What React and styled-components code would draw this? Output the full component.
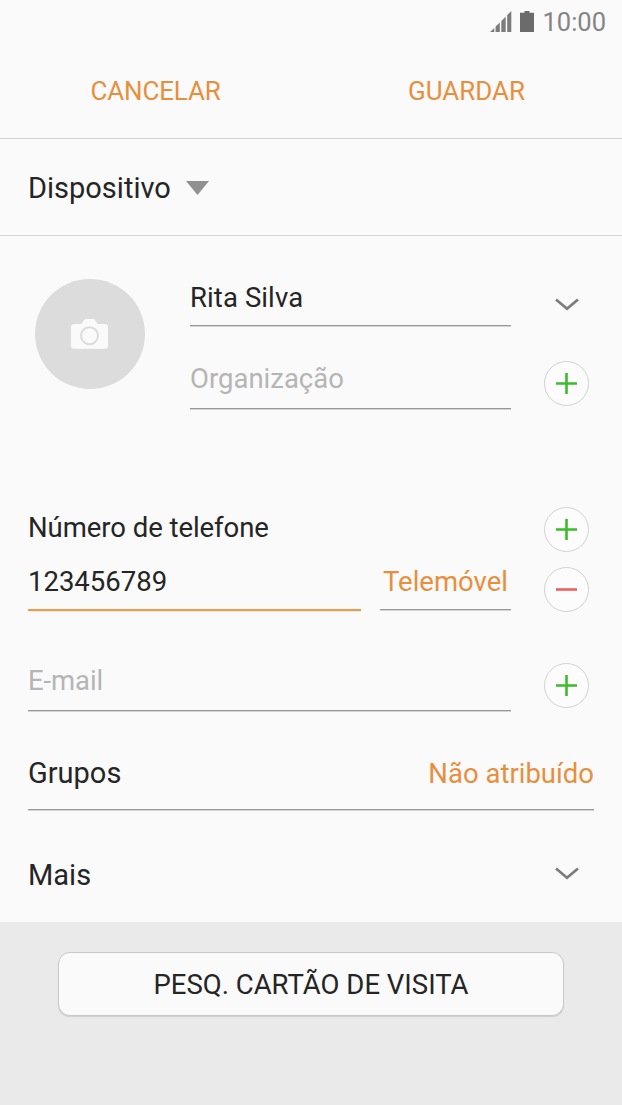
import styled, { createGlobalStyle } from 'styled-components';

const GlobalStyle = createGlobalStyle`
  * {
    box-sizing: border-box;
  }

  body {
    margin: 0;
    background: #fafafa;
    font-family: Roboto, "Noto Sans", sans-serif;
    color: #252525;
  }

  svg {
    display: block;
    flex: none;
  }
`;

const Screen = styled.div`
  display: flex;
  flex-direction: column;
  width: 622px;
  height: 1105px;
  overflow: hidden;
`;

const StatusBar = styled.div`
  display: flex;
  align-items: center;
  justify-content: flex-end;
  gap: 8px;
  height: 43px;
  padding-right: 16px;
`;

const Text = styled.span`
  font-size: ${({ $size }) => $size || 27.5}px;
  line-height: 32px;
  letter-spacing: ${({ $spacing }) => $spacing || 0}px;
  color: ${({ $color }) => $color || 'inherit'};
  white-space: nowrap;
`;

const Actions = styled.header`
  display: grid;
  grid-template-columns: 1fr 1fr;
  justify-items: center;
  height: 96px;
  padding-top: 32px;
  border-bottom: 1px solid #d2d2d2;
`;

const Storage = styled.div`
  display: flex;
  align-items: center;
  gap: 15px;
  height: 97px;
  padding: 2px 28px 0;
  border-bottom: 1px solid #d6d6d6;
`;

const Profile = styled.section`
  display: flex;
  gap: 45px;
  padding: 43px 33px 0 35px;
  height: 271px;
`;

const Avatar = styled.div`
  display: flex;
  align-items: center;
  justify-content: center;
  flex: none;
  width: 110px;
  height: 110px;
  padding-right: 1px;
  border-radius: 50%;
  background: #dcdcdc;
`;

const ProfileFields = styled.div`
  display: flex;
  flex-direction: column;
  gap: 34px;
  flex: 1;
`;

const Row = styled.div`
  display: flex;
  align-items: flex-start;
  justify-content: space-between;
  height: ${({ $height }) => $height}px;
`;

const Section = styled.section`
  padding: 0 33px 0 28px;
`;

const Label = styled.div`
  display: flex;
  padding-top: 5px;
`;

const PhoneFields = styled.div`
  display: flex;
  gap: 19px;
`;

const ButtonSlot = styled.div`
  padding-top: 2px;
`;

const Field = styled.div`
  width: ${({ $width }) => $width}px;
  height: ${({ $height }) => $height}px;
  padding-top: ${({ $top }) => $top || 0}px;
  text-align: ${({ $align }) => $align || 'left'};
  border-bottom: ${({ $active }) => ($active ? '2px solid #eb9b50' : '1px solid #989898')};
  box-shadow: 0 1px ${({ $active }) => ($active ? '#fbe9d8' : '#d4d4d4')};
`;

const RoundButton = styled.button`
  display: flex;
  align-items: center;
  justify-content: center;
  flex: none;
  width: 45px;
  height: 45px;
  padding: 0;
  border: 1px solid #d2d2d2;
  border-radius: 50%;
  background: #fcfcfc;
`;

const ChevronBox = styled.div`
  display: flex;
  justify-content: center;
  width: 45px;
  padding-top: ${({ $top }) => $top || 0}px;
`;

const Groups = styled.div`
  display: flex;
  align-items: baseline;
  justify-content: space-between;
  height: 53px;
  margin: 44px 28px 0;
  border-bottom: 1px solid #989898;
  box-shadow: 0 1px #d4d4d4;
`;

const More = styled.div`
  display: flex;
  justify-content: space-between;
  height: 112px;
  padding: 49px 33px 0 28px;
`;

const Footer = styled.footer`
  display: flex;
  justify-content: center;
  flex: 1;
  padding-top: 30px;
  background: #eaeaea;
`;

const CardButton = styled.button`
  width: 506px;
  height: 64px;
  padding: 2px 0 0;
  font-family: inherit;
  color: inherit;
  border: 1px solid #c9c9c9;
  border-radius: 12px;
  background: #fafafa;
  box-shadow: 0 1px 1px #cdcdcd;
`;

const orange = '#e88f3e';
const placeholder = '#b5b5b5';

const Signal = () => (
  <svg width="22" height="22" viewBox="0 0 22 22" fill="#7c7c7c">
    <path d="M0 21 4.300 17v4zM5.600 15.500l4.200-4V21H5.600zM11.300 10l4.400-4.200V21h-4.400zM17.200 4.100 21.300 0v21h-4.100z" />
  </svg>
);

const Battery = () => (
  <svg width="14" height="22" viewBox="0 0 14 22" fill="#6b6b6b">
    <path d="M4.500 0h5v1.800H14V21H0V1.800h4.500z" />
  </svg>
);

const Camera = () => (
  <svg width="37" height="30" viewBox="0 0 37 30">
    <path d="M3 5h7.500l2.200-3.600Q13.500 0 15 0h7q1.500 0 2.300 1.400L26.500 5H34q3 0 3 3v19q0 2.700-3 2.700H3q-3 0-3-2.700V8q0-3 3-3z" fill="#fafafa" />
    <circle cx="18.500" cy="16.700" r="8.500" fill="none" stroke="#dcdcdc" strokeWidth="2" />
  </svg>
);

const Chevron = () => (
  <svg width="24" height="13" viewBox="0 0 24 13">
    <path d="m1 1.500 11 9.200 11-9.200" fill="none" stroke="#7d7d7d" strokeWidth="2.800" />
  </svg>
);

const Plus = () => (
  <RoundButton aria-label="Adicionar">
    <svg width="21" height="21" viewBox="0 0 21 21">
      <path d="M0 10.500h21M10.500 0v21" stroke="#3dbb2c" strokeWidth="2.600" />
    </svg>
  </RoundButton>
);

const Minus = () => (
  <RoundButton aria-label="Remover">
    <svg width="21" height="21" viewBox="0 0 21 21">
      <path d="M0 10.500h21" stroke="#f0605f" strokeWidth="2.600" />
    </svg>
  </RoundButton>
);

export default function App() {
  return (
    <Screen>
      <GlobalStyle />
      <StatusBar>
        <Signal />
        <Battery />
        <Text $size={25.5} $color="#848484">10:00</Text>
      </StatusBar>

      <Actions>
        <Text $size={26} $spacing={-0.15} $color={orange}>CANCELAR</Text>
        <Text $size={26} $color={orange}>GUARDAR</Text>
      </Actions>

      <Storage>
        <Text $size={29}>Dispositivo</Text>
        <svg width="23" height="14" viewBox="0 0 23 14">
          <path d="M0 0h23L11.500 14z" fill="#919191" />
        </svg>
      </Storage>

      <Profile>
        <Avatar><Camera /></Avatar>
        <ProfileFields>
          <Row $height={48}>
            <Field $width={321} $height={47} $top={3}>
              <Text $spacing={0.1}>Rita Silva</Text>
            </Field>
            <ChevronBox $top={19}><Chevron /></ChevronBox>
          </Row>
          <Row $height={49}>
            <Field $width={321} $height={48} $top={2}>
              <Text $color={placeholder}>Organização</Text>
            </Field>
            <Plus />
          </Row>
        </ProfileFields>
      </Profile>

      <Section>
        <Row $height={58}>
          <Label>
            <Text $spacing={-0.05}>Número de telefone</Text>
          </Label>
          <Plus />
        </Row>
        <Row $height={98}>
          <PhoneFields>
            <Field $width={333} $height={46} $top={1} $active>
              <Text>123456789</Text>
            </Field>
            <Field $width={131} $height={45} $top={1} $align="center">
              <Text $color={orange}>Telemóvel</Text>
            </Field>
          </PhoneFields>
          <ButtonSlot><Minus /></ButtonSlot>
        </Row>
        <Row $height={50}>
          <Field $width={483} $height={48} $top={2}>
            <Text $spacing={-0.1} $color={placeholder}>E-mail</Text>
          </Field>
          <Plus />
        </Row>
      </Section>

      <Groups>
        <Text $size={29}>Grupos</Text>
        <Text $color={orange}>Não atribuído</Text>
      </Groups>

      <More>
        <Text $size={29}>Mais</Text>
        <ChevronBox $top={8}><Chevron /></ChevronBox>
      </More>

      <Footer>
        <CardButton><Text>PESQ. CARTÃO DE VISITA</Text></CardButton>
      </Footer>
    </Screen>
  );
}
